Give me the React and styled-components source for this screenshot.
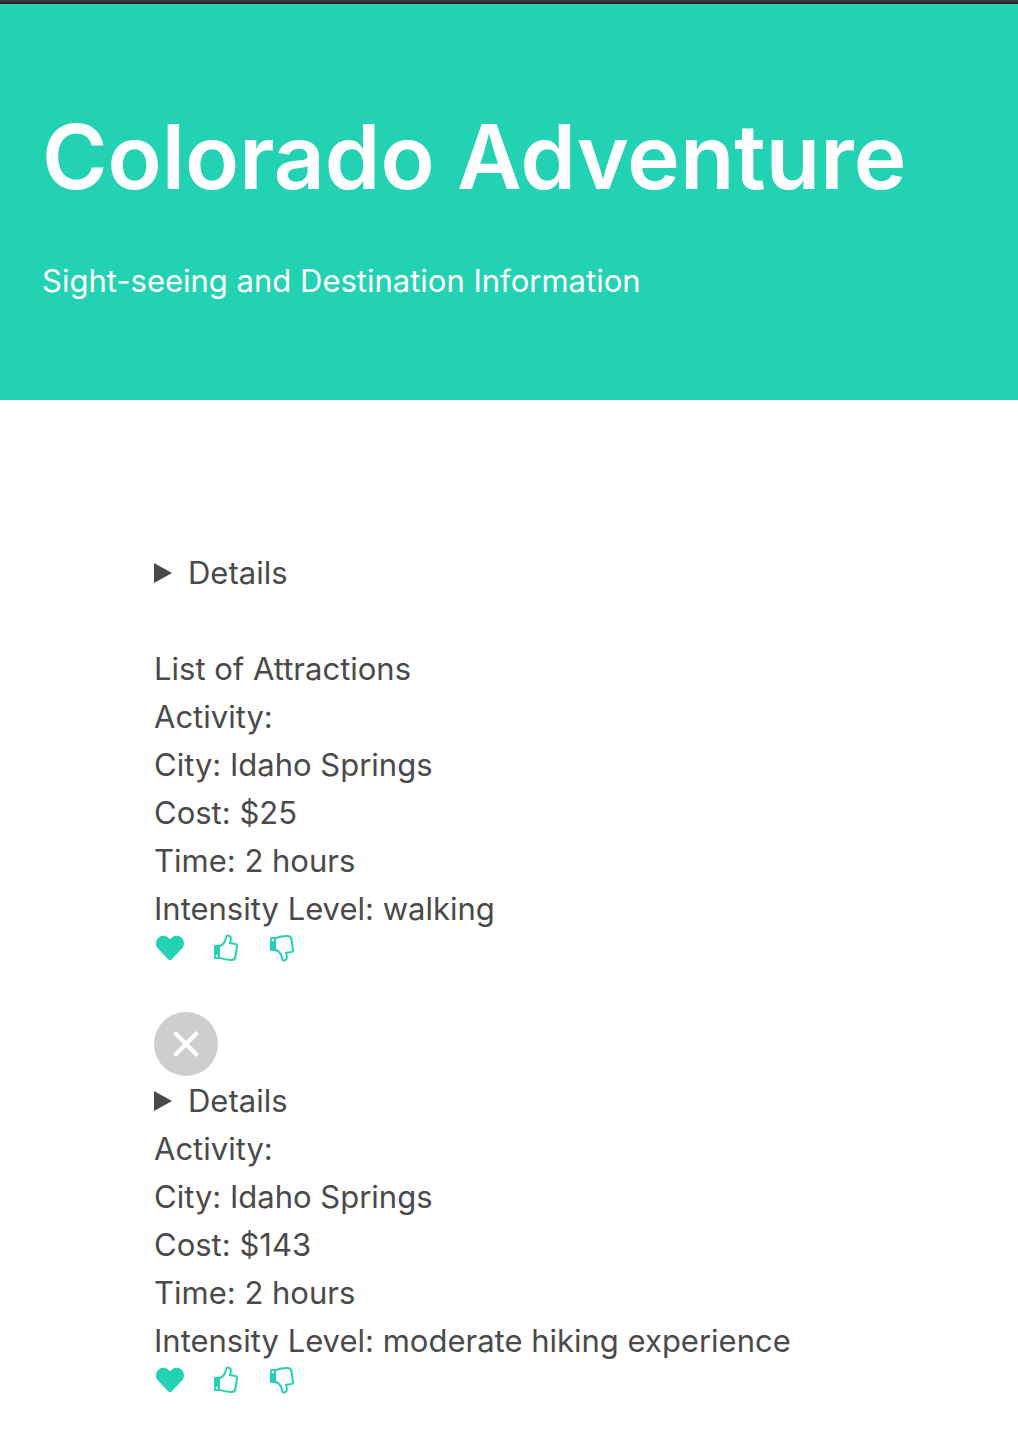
import React from "react";
import styled, { createGlobalStyle } from "styled-components";
import { FaHeart } from "react-icons/fa";

const GlobalStyle = createGlobalStyle`
  *, *::before, *::after { box-sizing: border-box; }
  body {
    margin: 0;
    background: #fff;
    color: #4a4a4a;
    font-family: Inter, "Liberation Sans", sans-serif;
    font-size: 31px;
    line-height: 48px;
  }
`;

const TopBar = styled.div`
  height: 4px;
  background: #38393d;
  border-bottom: 2px solid #25282b;
`;

const Hero = styled.header`
  padding: 93px 42px 95px;
  background: #23d1b3;
  color: #fff;
`;

const Title = styled.h1`
  margin: 0;
  font-size: 89px;
  font-weight: 600;
  line-height: 120px;
`;

const Subtitle = styled.p`
  margin: 40px 0 0;
`;

const Main = styled.main`
  display: flex;
  flex-direction: column;
  align-items: flex-start;
  padding: 149px 42px 28px 154px;
`;

const Details = styled.details`
  summary {
    display: flex;
    align-items: center;
    gap: 16px;
    cursor: pointer;
    list-style: none;
  }
  summary::-webkit-details-marker { display: none; }
`;

const Marker = styled.svg`
  width: 18px;
  height: 20px;
  fill: currentColor;
`;

const ListHeading = styled.p`
  margin: 48px 0 0;
`;

const Facts = styled.ul`
  margin: 0;
  padding: 0;
  list-style: none;
`;

const Actions = styled.div`
  display: flex;
  gap: 24px;
`;

const IconButton = styled.button`
  display: flex;
  align-items: center;
  justify-content: center;
  width: 32px;
  height: 30px;
  padding: 0;
  border: 0;
  background: none;
  color: #23d1b3;
  font-size: 28px;
  cursor: pointer;
`;

const DeleteButton = styled.button`
  display: flex;
  align-items: center;
  justify-content: center;
  width: 64px;
  height: 64px;
  margin: 49px 0 1px;
  padding: 0;
  border: 0;
  border-radius: 50%;
  background: #cecece;
  color: #fff;
  cursor: pointer;
`;

function ThumbIcon({ down }) {
  return (
    <svg width="28" height="28" viewBox="0 0 28 28" aria-hidden="true">
      <g transform={down ? "matrix(1 0 0 -1 0 28)" : undefined}>
        <path
          fill="currentColor"
          fillRule="evenodd"
          d="M3.200 11H8V25H3.500Q2 25 2 23.500V12.200Q2 11 3.200 11ZM4.800 20.800A1.200 1.200 0 1 0 4.800 23.200A1.200 1.200 0 1 0 4.800 20.800Z"
        />
        <path
          fill="none"
          stroke="currentColor"
          strokeWidth="2"
          strokeLinejoin="round"
          d="M7.500 12.200C11.200 10.800 13.300 7.800 14 4C14.300 1.700 15.400 1.200 16.700 1.600C19.500 2.500 19.300 5.500 17.800 9.300L22.500 9.700C24.600 9.900 25.200 10.800 25 12.600L23.300 23.300C22.900 25.500 21.800 26 19.500 26C15 26 11 25.200 7.500 23.900"
        />
      </g>
    </svg>
  );
}

function Disclosure() {
  return (
    <Details>
      <summary>
        <Marker viewBox="0 0 18 20" aria-hidden="true"><path d="M0 0 18 10 0 20Z" /></Marker>
        Details
      </summary>
    </Details>
  );
}

function Attraction({ city, cost, time, intensity }) {
  return (
    <>
      <Facts>
        <li>Activity:</li>
        <li>City: {city}</li>
        <li>Cost: {cost}</li>
        <li>Time: {time}</li>
        <li>Intensity Level: {intensity}</li>
      </Facts>
      <Actions>
        <IconButton aria-label="Favorite"><FaHeart /></IconButton>
        <IconButton aria-label="Like"><ThumbIcon /></IconButton>
        <IconButton aria-label="Dislike"><ThumbIcon down /></IconButton>
      </Actions>
    </>
  );
}

export default function App() {
  return (
    <>
      <GlobalStyle />
      <TopBar />
      <Hero>
        <Title>Colorado Adventure</Title>
        <Subtitle>Sight-seeing and Destination Information</Subtitle>
      </Hero>
      <Main>
        <Disclosure />
        <ListHeading>List of Attractions</ListHeading>
        <Attraction city="Idaho Springs" cost="$25" time="2 hours" intensity="walking" />
        <DeleteButton aria-label="Delete">
          <svg width="28" height="28" viewBox="0 0 28 28" stroke="currentColor" strokeWidth="4" aria-hidden="true">
            <path d="M2.500 2.500 25.500 25.500M25.500 2.500 2.500 25.500" />
          </svg>
        </DeleteButton>
        <Disclosure />
        <Attraction city="Idaho Springs" cost="$143" time="2 hours" intensity="moderate hiking experience" />
      </Main>
    </>
  );
}
